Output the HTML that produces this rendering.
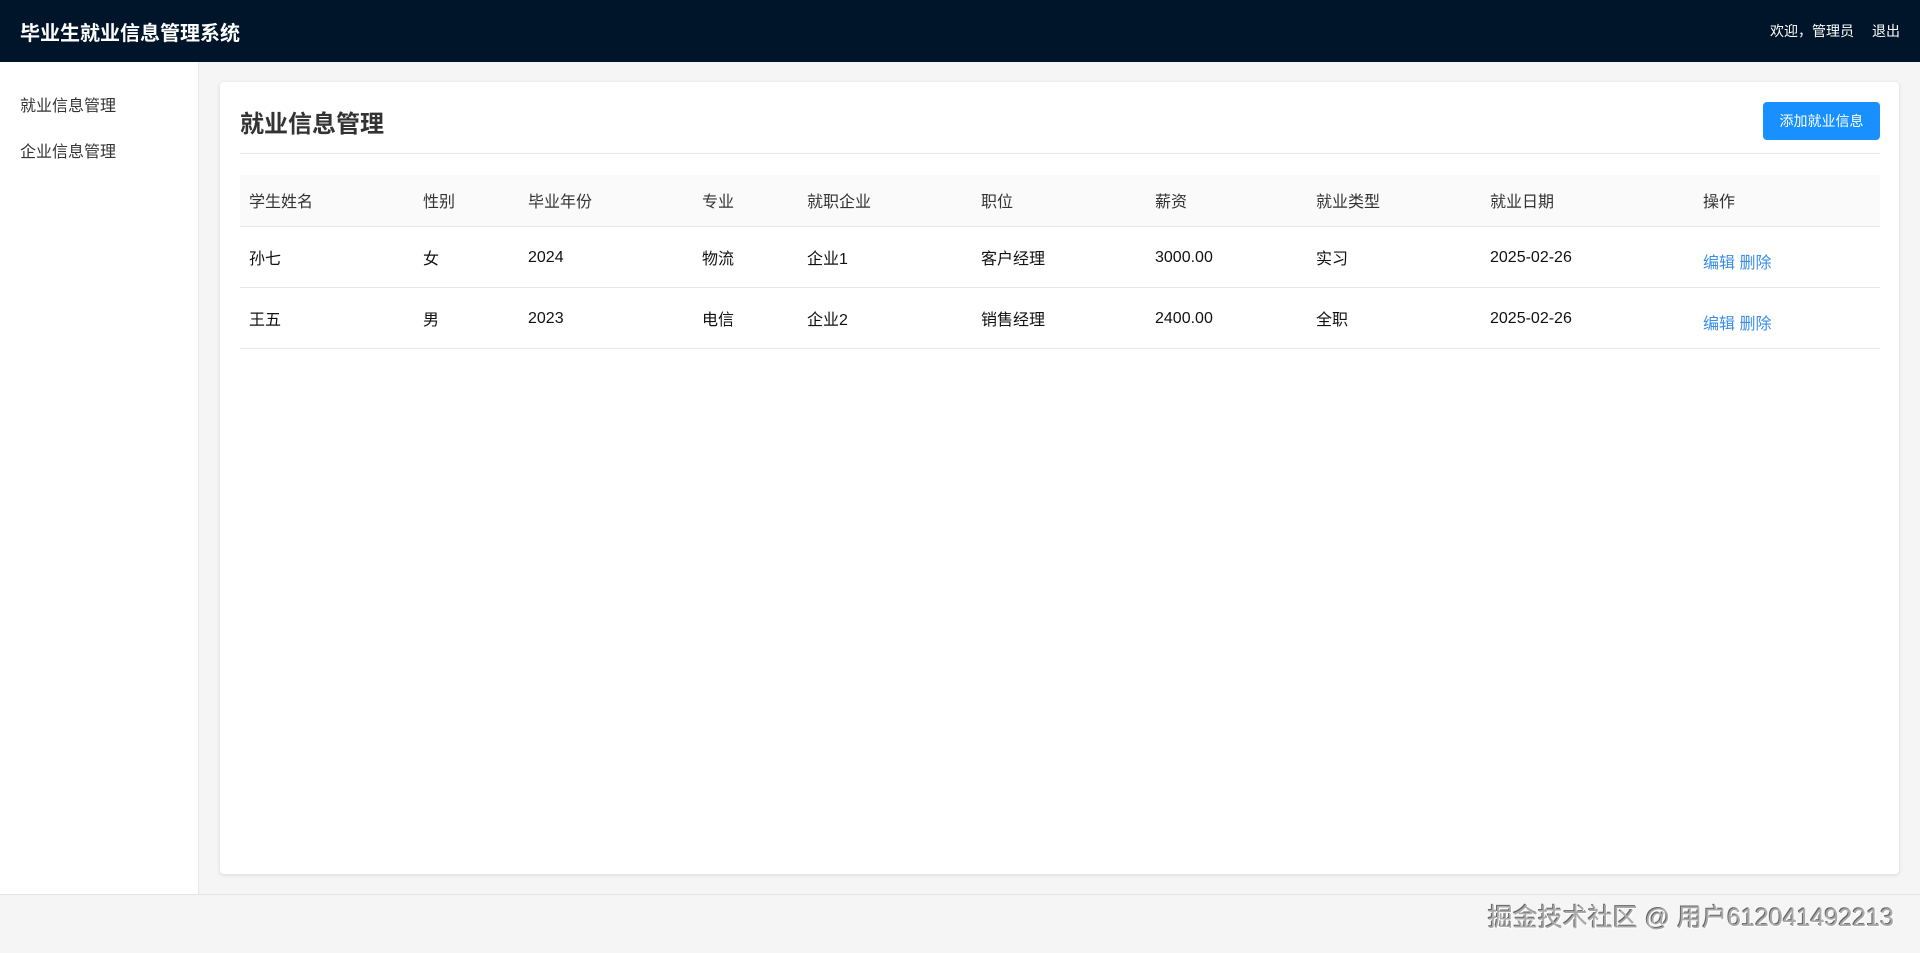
<!DOCTYPE html>
<html><head><meta charset="utf-8">
<style>
*{margin:0;padding:0;box-sizing:border-box}
body{width:1920px;height:953px;overflow:hidden;background:#f5f5f5;font-family:"Liberation Sans","Noto Sans CJK SC",sans-serif;color:#333;position:relative}
.hd{position:absolute;left:0;top:0;width:1920px;height:62px;background:#001529;color:#fff}
.hd .t{position:absolute;left:20px;top:17px;font-size:20px;font-weight:bold}
.hd .r{position:absolute;right:20px;top:21px;font-size:14px}
.hd .r span{margin-left:18px}
.sb{position:absolute;left:0;top:62px;width:199px;height:832px;background:#fff;border-right:1px solid #e8e8e8}
.sb div{position:absolute;left:20px;font-size:16px;color:#333}
.card{position:absolute;left:220px;top:82px;width:1679px;height:792px;background:#fff;border-radius:4px;box-shadow:0 1px 4px rgba(0,0,0,.12)}
.card h2{position:absolute;left:20px;top:22px;font-size:24px;font-weight:bold;color:#333}
.btn{position:absolute;left:1543px;top:20px;width:117px;height:38px;background:#1890ff;color:#fff;border-radius:4px;font-size:14px;text-align:center;line-height:38px}
.div{position:absolute;left:20px;top:71px;width:1640px;height:1px;background:#e8e8e8}
table{position:absolute;left:20px;top:93px;width:1640px;border-collapse:collapse;font-size:16px}
th{background:#fafafa;font-weight:normal;text-align:left;height:51px;padding-left:9px;color:#333;border-bottom:1px solid #e8e8e8}
td{height:61px;padding-left:9px;border-bottom:1px solid #e8e8e8;color:#111}
td.n span{position:relative;top:1px}
td a{color:#3a8ee6;text-decoration:none;position:relative;top:4px}
.ft{position:absolute;left:0;top:894px;width:1920px;height:59px;background:#f5f5f5;border-top:1px solid #e4e4e4}
.wm{position:absolute;right:26px;top:898px;font-size:25px;color:#aaa;text-shadow:1px 1px 0 #fff,-1px -1px 0 #666}
</style></head><body>
<div class="hd"><div class="t">毕业生就业信息管理系统</div><div class="r">欢迎，管理员<span>退出</span></div></div>
<div class="sb"><div style="top:30px">就业信息管理</div><div style="top:76px">企业信息管理</div></div>
<div class="card">
<h2>就业信息管理</h2>
<div class="btn">添加就业信息</div>
<div class="div"></div>
<table>
<colgroup><col style="width:174px"><col style="width:105px"><col style="width:174px"><col style="width:105px"><col style="width:174px"><col style="width:174px"><col style="width:161px"><col style="width:174px"><col style="width:213px"><col></colgroup>
<tr><th>学生姓名</th><th>性别</th><th>毕业年份</th><th>专业</th><th>就职企业</th><th>职位</th><th>薪资</th><th>就业类型</th><th>就业日期</th><th>操作</th></tr>
<tr><td>孙七</td><td>女</td><td class="n"><span>2024</span></td><td>物流</td><td>企业1</td><td>客户经理</td><td class="n"><span>3000.00</span></td><td>实习</td><td class="n"><span>2025-02-26</span></td><td><a>编辑</a> <a>删除</a></td></tr>
<tr><td>王五</td><td>男</td><td class="n"><span>2023</span></td><td>电信</td><td>企业2</td><td>销售经理</td><td class="n"><span>2400.00</span></td><td>全职</td><td class="n"><span>2025-02-26</span></td><td><a>编辑</a> <a>删除</a></td></tr>
</table>
</div>
<div class="ft"></div>
<div class="wm">掘金技术社区 @ 用户612041492213</div>
</body></html>
